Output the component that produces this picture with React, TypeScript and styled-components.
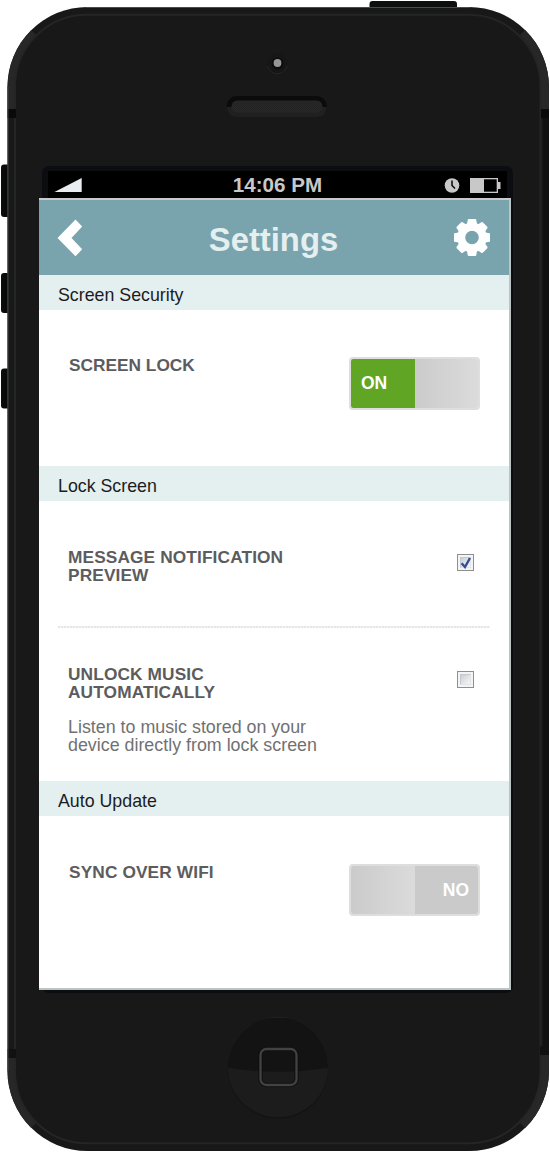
import React from 'react';
import styled, { createGlobalStyle } from 'styled-components';

const GlobalStyle = createGlobalStyle`
  * { box-sizing: border-box; }
  body { margin: 0; background: #fff; font-family: "Liberation Sans", Arial, sans-serif; }
  h1, h2, h3, p { margin: 0; }
`;

const Phone = styled.div`
  position: relative;
  width: 550px;
  height: 1152px;
  overflow: hidden;
  display: flex;
  flex-direction: column;
`;

const Hardware = styled.svg`
  position: absolute;
  inset: 0;
`;

const TopBezel = styled.div`
  height: 166px;
  flex: none;
  position: relative;
`;

const Display = styled.div`
  position: relative;
  width: 471px;
  height: 827px;
  flex: none;
  margin-left: 42px;
  padding-top: 5px;
  background: #0b0d11;
  border-radius: 7px;
`;

const StatusBar = styled.div`
  height: 27px;
  margin: 0 6px;
  padding: 0 6px;
  background: #000;
  display: grid;
  grid-template-columns: 1fr auto 1fr;
  align-items: center;
`;

const Clock = styled.span`
  font-size: 20.6px;
  line-height: 27px;
  font-weight: bold;
  color: #c8c8c8;
`;

const StatusIcons = styled.div`
  display: flex;
  justify-content: flex-end;
  align-items: center;
  gap: 10px;
`;

const Screen = styled.main`
  width: 472px;
  height: 792px;
  margin-left: -3px;
  background: #fff;
  border: solid #bcc4c3;
  border-width: 2px 2px 2px 0;
  border-top-color: #c9c9c7;
  display: flex;
  flex-direction: column;
`;

const Header = styled.header`
  height: 75px;
  flex: none;
  padding: 0 19px 0 18px;
  background: #79a4ad;
  display: grid;
  grid-template-columns: 1fr auto 1fr;
  align-items: center;
`;

const Title = styled.h1`
  font-size: 32.8px;
  line-height: 40px;
  color: #e5efef;
  padding-top: 4px;
`;

const HeaderIcon = styled.button<{ $end?: boolean }>`
  border: 0;
  padding: 0;
  background: none;
  display: flex;
  justify-self: ${p => (p.$end ? 'end' : 'start')};
`;

const SectionTitle = styled.h2`
  height: 35px;
  flex: none;
  padding: 3px 0 0 19px;
  background: #e4efef;
  color: #1c1c1f;
  font-size: 17.8px;
  font-weight: normal;
  line-height: 35px;
`;

const Row = styled.section<{ $height: number; $top: number; $left?: number }>`
  height: ${p => p.$height}px;
  flex: none;
  padding: ${p => p.$top}px 29px 0 ${p => p.$left ?? 29}px;
  display: flex;
  justify-content: space-between;
  align-items: flex-start;
`;

const Label = styled.h3<{ $wide?: boolean }>`
  font-size: 17.3px;
  letter-spacing: ${p => (p.$wide ? '0.12px' : '0')};
  line-height: 17.5px;
  color: #5c5c5e;
`;

const Hint = styled.p`
  margin-top: 18px;
  font-size: 17.85px;
  line-height: 17.5px;
  color: #717173;
`;

const Divider = styled.div`
  height: 2px;
  flex: none;
  margin: 0 19px 0 19px;
  background: repeating-linear-gradient(90deg, #e6e6e6 0 2px, #f4f4f4 2px 3px);
`;

const Toggle = styled.div<{ $on: boolean }>`
  width: 131px;
  height: ${p => (p.$on ? 53 : 52)}px;
  border: 2px solid #dedede;
  border-radius: 4px;
  display: grid;
  grid-template-columns: 64px 1fr;
  overflow: hidden;
`;

const Knob = styled.div`
  background: linear-gradient(90deg, #cbcbcb, #dbdbdb);
`;

const ToggleText = styled.div<{ $on: boolean }>`
  display: flex;
  align-items: center;
  padding: ${p => (p.$on ? '0 0 0 10px' : '0 9px 0 0')};
  justify-content: ${p => (p.$on ? 'flex-start' : 'flex-end')};
  background: ${p => (p.$on ? '#60a624' : '#cacaca')};
  color: #fff;
  font-size: 17.5px;
  font-weight: bold;
`;

const Checkbox = styled.div`
  width: 17px;
  height: 17px;
  margin: 5px 6px 0 0;
  border: 1px solid #8d8f90;
  background: #f4f4f4;
  padding: 2px;
  position: relative;
`;

const CheckWell = styled.div`
  width: 11px;
  height: 11px;
  border: 1px solid #c5c9cd;
  border-right-color: #e2e4e5;
  border-bottom-color: #e2e4e5;
  background: linear-gradient(135deg, #c9cfd5, #f8f8f8);
`;

const CheckMark = styled.svg`
  position: absolute;
  left: 2px;
  top: 1px;
`;

const Check = ({ checked = false }: { checked?: boolean }) => (
  <Checkbox role="checkbox" aria-checked={checked}>
    <CheckWell />
    {checked && (
      <CheckMark width="12" height="13" viewBox="0 0 12 13" fill="none">
        <path d="M1.6 7.2 5 11 10 2" stroke="#354f97" strokeWidth="2.4" />
      </CheckMark>
    )}
  </Checkbox>
);

const Switch = ({ on }: { on: boolean }) => (
  <Toggle $on={on} role="switch" aria-checked={on}>
    {on ? (
      <>
        <ToggleText $on>ON</ToggleText>
        <Knob />
      </>
    ) : (
      <>
        <Knob />
        <ToggleText $on={false}>NO</ToggleText>
      </>
    )}
  </Toggle>
);

const teeth = [0, 45, 90, 135, 180, 225, 270, 315];

const Gear = () => (
  <svg width="36" height="37" viewBox="-18 -18.5 36 37" fill="#fff">
    <circle r="10.8" fill="none" stroke="#fff" strokeWidth="8" />
    {teeth.map(a => (
      <path key={a} transform={`rotate(${a})`} d="M-5.2-12-4.3-17.4Q-4.1-18.4-3.2-18.4H3.2Q4.1-18.4 4.3-17.4L5.2-12Z" />
    ))}
  </svg>
);

const BodyArt = () => (
  <Hardware width="550" height="1152" viewBox="0 0 550 1152">
    <defs>
      <clipPath id="shell">
        <rect x="7.5" y="7" width="541.5" height="1144" rx="80" />
      </clipPath>
      <linearGradient id="key" x1="0" x2="1">
        <stop offset="0" stopColor="#0c0e0e" />
        <stop offset=".4" stopColor="#080909" />
        <stop offset="1" stopColor="#0e1010" />
      </linearGradient>
      <pattern id="mesh" width="2" height="2" patternUnits="userSpaceOnUse">
        <rect width="2" height="2" fill="#292929" />
        <path d="M0 0h1v1H0zM1 1h1v1H1z" fill="#222" />
      </pattern>
      <clipPath id="homeClip">
        <circle cx="278" cy="1067" r="50" />
      </clipPath>
    </defs>
    <rect x="1" y="164.500" width="12" height="52.500" rx="3" fill="url(#key)" />
    <rect x="1" y="273" width="12" height="40" rx="3" fill="url(#key)" />
    <rect x="1" y="368.500" width="12" height="40" rx="3" fill="url(#key)" />
    <path d="M369.500 9V4Q369.500 1 372.500 1H454Q457 1 457 4V9Z" fill="#0c0f0e" />
    <g clipPath="url(#shell)">
      <rect x="7" y="7" width="543" height="1145" fill="#181818" />
      <path d="M7 109V7L32 31 36 35Q16 55 16 87V109ZM550 109V7L524 31 520 35Q540 55 540 87V109Z" fill="#272727" />
      <path d="M7 1058V1152L36 1123Q16 1101 16 1068V1058ZM550 1055V1152L520 1123Q540 1101 540 1068V1055Z" fill="#272727" />
      <rect x="15" y="14.800" width="525.500" height="1128.500" rx="72" fill="#181818" stroke="#252525" strokeWidth="2" />
      <path d="M7 109h9v9H7zM541 109h9v9h-9z" fill="#0a0a0a" />
      <path d="M7 1049h9v9H7zM540 1046h10v9h-10z" fill="#111" />
      <path d="M543 118h7v928h-7z" fill="#111" />
    </g>
    <path d="M7.900 87V1071M86 7.500H470" stroke="#4c4c4c" strokeWidth="1" fill="none" />
    <circle cx="277" cy="63.500" r="10" fill="#161616" />
    <path d="M267.500 66A10 10 0 0 0 287 66" fill="none" stroke="#252525" />
    <circle cx="277.500" cy="63.500" r="6" fill="#0c0c0c" />
    <circle cx="277.500" cy="63" r="3.900" fill="#959595" />
    <rect x="226.500" y="96" width="100.500" height="21" rx="10.500" fill="#0b0b0b" />
    <path d="M226.500 107H327Q326 117 316.500 117H237Q227.500 117 226.500 107Z" fill="#202020" />
    <rect x="231.500" y="100.500" width="91" height="12" rx="6" fill="url(#mesh)" />
    <circle cx="278" cy="1068" r="50.500" fill="#111" />
    <circle cx="278" cy="1067" r="50.500" fill="#1f1f1f" />
    <g clipPath="url(#homeClip)">
      <rect x="227" y="1018" width="102" height="100" fill="#131313" />
      <path d="M227 1067.500Q278 1076 329 1067.500V1119H227Z" fill="#1c1c1c" />
    </g>
    <rect x="260.500" y="1049" width="36" height="36" rx="6" fill="none" stroke="#111" strokeWidth="4.500" />
    <rect x="260.500" y="1049" width="36" height="36" rx="6" fill="none" stroke="#424242" strokeWidth="2.300" />
  </Hardware>
);

export default function App() {
  return (
    <>
      <GlobalStyle />
      <Phone>
        <BodyArt />
        <TopBezel />
        <Display>
          <StatusBar>
            <svg width="28" height="27" viewBox="0 0 28 27">
              <path d="M.500 21 27.700 7V21Z" fill="#e9edf2" />
            </svg>
            <Clock>14:06 PM</Clock>
            <StatusIcons>
              <svg width="16" height="27" viewBox="0 0 16 27" fill="none">
                <circle cx="8" cy="14.500" r="7.300" fill="#c8c8c8" />
                <path d="M8 9.500V14.500L11 17.500" stroke="#050505" strokeWidth="1.500" />
              </svg>
              <svg width="31" height="27" viewBox="0 0 31 27">
                <path d="M0 7H28V11H30.500V18H28V22H0Z" fill="#c8c8c8" />
                <path d="M14 8.300H26.700V20.700H14Z" fill="#000" />
              </svg>
            </StatusIcons>
          </StatusBar>
          <Screen>
            <Header>
              <HeaderIcon aria-label="Back">
                <svg width="26" height="38" viewBox="0 0 26 38">
                  <path d="M18.500.500 25.200 7.500 14.500 19 25.200 30.300 18.500 37.300.500 19Z" fill="#fff" />
                </svg>
              </HeaderIcon>
              <Title>Settings</Title>
              <HeaderIcon $end aria-label="Options">
                <Gear />
              </HeaderIcon>
            </Header>
            <SectionTitle>Screen Security</SectionTitle>
            <Row $height={156} $top={47} $left={30}>
              <Label>SCREEN LOCK</Label>
              <Switch on />
            </Row>
            <SectionTitle>Lock Screen</SectionTitle>
            <Row $height={125} $top={48}>
              <Label $wide>
                MESSAGE NOTIFICATION
                <br />
                PREVIEW
              </Label>
              <Check checked />
            </Row>
            <Divider />
            <Row $height={153} $top={38}>
              <div>
                <Label $wide>
                  UNLOCK MUSIC
                  <br />
                  AUTOMATICALLY
                </Label>
                <Hint>
                  Listen to music stored on your
                  <br />
                  device directly from lock screen
                </Hint>
              </div>
              <Check />
            </Row>
            <SectionTitle>Auto Update</SectionTitle>
            <Row $height={171} $top={48} $left={30}>
              <Label $wide>SYNC OVER WIFI</Label>
              <Switch on={false} />
            </Row>
          </Screen>
        </Display>
      </Phone>
    </>
  );
}
